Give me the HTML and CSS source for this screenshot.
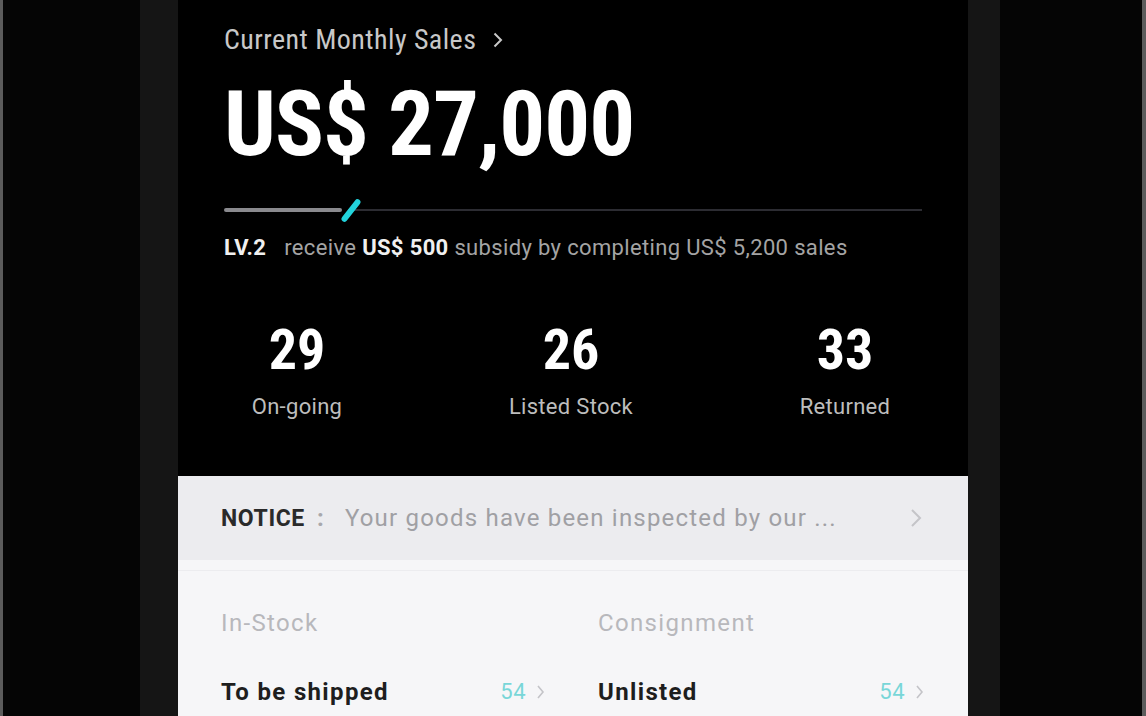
FILE: index.html
```html
<!DOCTYPE html>
<html lang="en">
<head>
<meta charset="utf-8">
<title>Monthly Sales</title>
<link rel="stylesheet" href="styles.css">
</head>
<body>
<div class="stage">
  <div class="edge"></div>
  <div class="void void-left"></div>
  <div class="device">
    <div class="screen">
      <section class="sales">
        <div class="title">Current Monthly Sales
          <svg class="title-chev" width="12" height="16" viewBox="0 0 12 16"><path d="M2.5 1.5 L9 8 L2.5 14.5" fill="none" stroke="#c8c8c8" stroke-width="2"/></svg>
        </div>
        <div class="amount">US$ 27,000</div>
        <div class="progress">
          <div class="bar-done"></div>
          <div class="bar-rest"></div>
          <div class="marker"></div>
        </div>
        <div class="level"><b class="lv">LV.2</b>receive <b>US$ 500</b> subsidy by completing US$ 5,200 sales</div>
        <div class="stats">
          <div class="stat"><div class="stat-num">29</div><div class="stat-label">On-going</div></div>
          <div class="stat"><div class="stat-num">26</div><div class="stat-label">Listed Stock</div></div>
          <div class="stat"><div class="stat-num">33</div><div class="stat-label">Returned</div></div>
        </div>
      </section>
      <section class="card">
        <div class="notice">
          <span class="notice-tag">NOTICE</span>
          <span class="notice-colon">:</span>
          <span class="notice-text">Your goods have been inspected by our ...</span>
          <svg class="notice-chev" width="12" height="20" viewBox="0 0 12 20"><path d="M2 2 L10 10 L2 18" fill="none" stroke="#c4c4c8" stroke-width="2"/></svg>
        </div>
        <div class="groups">
          <div class="group">
            <div class="group-head">In-Stock</div>
            <div class="row"><span class="row-name">To be shipped</span><span class="row-count">54</span>
              <svg class="row-chev" width="9" height="16" viewBox="0 0 9 16"><path d="M2 2 L7 8 L2 14" fill="none" stroke="#c4c4c8" stroke-width="1.6"/></svg></div>
          </div>
          <div class="group">
            <div class="group-head">Consignment</div>
            <div class="row"><span class="row-name">Unlisted</span><span class="row-count">54</span>
              <svg class="row-chev" width="9" height="16" viewBox="0 0 9 16"><path d="M2 2 L7 8 L2 14" fill="none" stroke="#c4c4c8" stroke-width="1.6"/></svg></div>
          </div>
        </div>
      </section>
    </div>
  </div>
  <div class="void void-right"></div>
  <div class="edge edge-right"></div>
</div>
</body>
</html>
```
FILE: styles.css
```css
* { box-sizing: border-box; }
html, body { margin: 0; padding: 0; }
body {
  background: #040404;
  font-family: "Roboto Condensed", Roboto, "Liberation Sans", sans-serif;
  overflow: hidden;
}
.stage {
  display: flex;
  width: 1146px;
  height: 716px;
  overflow: hidden;
}
.edge { width: 3px; background: #5c5c5c; flex: none; }
.edge-right { width: 4px; }
.void { background: #050505; }
.void-left { width: 137px; flex: none; }
.void-right { flex: 1; }
.device {
  flex: none;
  background: #151515;
  padding: 0 32px 0 38px;
}
.screen {
  width: 790px;
  height: 716px;
  background: #000;
  display: flex;
  flex-direction: column;
  overflow: hidden;
}
.sales {
  padding: 22px 46px 0;
  color: #fff;
}
.title {
  font-size: 28px;
  line-height: 36px;
  color: #c8c8c8;
  letter-spacing: 0.45px;
  display: flex;
  align-items: center;
  gap: 16px;
}
.title-chev { margin-top: -1px; }
.amount {
  margin-top: 21px;
  font-size: 91px;
  line-height: 90px;
  font-weight: 700;
  letter-spacing: -1px;
  color: #fff;
}
.progress {
  position: relative;
  margin-top: 29px;
  height: 24px;
  display: flex;
  align-items: center;
}
.bar-done { width: 118px; height: 4px; background: #8a8a8e; border-radius: 2px; }
.bar-rest { flex: 1; height: 2px; background: #2c2c32; margin-left: 6px; }
.marker {
  position: absolute;
  left: 124px;
  top: -1px;
  width: 6px;
  height: 27px;
  background: #22d3dc;
  border-radius: 3px;
  transform: rotate(38deg);
}
.level {
  margin-top: 14px;
  font-family: Roboto, "Liberation Sans", sans-serif;
  font-size: 22px;
  line-height: 24px;
  color: #a4a4a4;
  letter-spacing: 0.35px;
  white-space: nowrap;
}
.level b { color: #f0f0f0; font-weight: 700; }
.level .lv { margin-right: 18px; }
.stats {
  margin-top: 60px;
  display: grid;
  grid-template-columns: repeat(3, 120px);
  column-gap: 154px;
  justify-content: center;
  margin-left: -48px;
  margin-right: -44px;
}
.stat { text-align: center; }
.stat-num {
  font-size: 56px;
  line-height: 60px;
  font-weight: 700;
  color: #fff;
}
.stat-label {
  margin-top: 14px;
  font-family: Roboto, "Liberation Sans", sans-serif;
  font-size: 22px;
  line-height: 26px;
  letter-spacing: 0.3px;
  color: #bdbdbd;
  white-space: nowrap;
  margin-left: -40px;
  margin-right: -40px;
}
.card {
  margin-top: 56px;
  background: #f6f6f8;
  flex: 1;
}
.notice {
  height: 84px;
  background: #ececef;
  display: flex;
  align-items: center;
  padding: 0 46px 0 43px;
  font-family: Roboto, "Liberation Sans", sans-serif;
  font-size: 24px;
  letter-spacing: 1.2px;
}
.notice-tag {
  font-weight: 700;
  font-size: 23px;
  color: #2a2a2a;
  letter-spacing: 0.6px;
}
.notice-colon { color: #a8a8ac; margin: 0 20px 0 12px; font-weight: 700; }
.notice-text { color: #a0a0a4; flex: 1; }
.notice-chev { flex: none; }
.groups {
  border-top: 1px solid #ececef;
  margin-top: 10px;
  padding: 37px 44px 0 43px;
  display: grid;
  grid-template-columns: 324px 326px;
  column-gap: 53px;
  font-family: Roboto, "Liberation Sans", sans-serif;
  font-size: 24px;
  letter-spacing: 1.35px;
}
.group-head {
  line-height: 30px;
  color: #b8b8bc;
}
.row {
  margin-top: 39px;
  display: flex;
  align-items: center;
  line-height: 30px;
}
.row-name { flex: 1; font-weight: 700; color: #1e1e1e; }
.row-count { color: #79d6d8; font-size: 22px; letter-spacing: 0.5px; margin-right: 10px; }
.row-chev { flex: none; }
```
